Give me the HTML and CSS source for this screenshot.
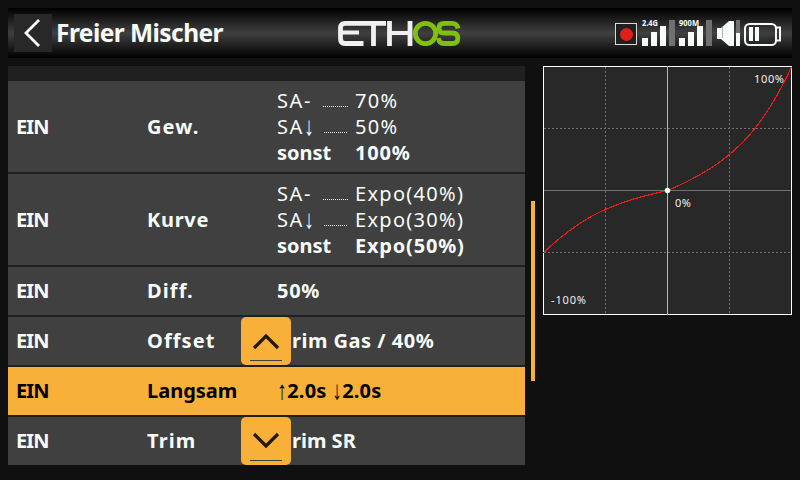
FILE: index.html
```html
<!DOCTYPE html>
<html lang="de">
<head>
<meta charset="utf-8">
<title>Freier Mischer</title>
<link rel="stylesheet" href="styles.css">
</head>
<body>
<header class="topbar">
  <div class="back"><svg width="38" height="38" fill="none" stroke="#fff" stroke-width="2.8"><path d="M25 6 12 19 25 32"/></svg></div>
  <h1 class="title">Freier Mischer</h1>
  <svg class="logo" width="124" height="26" fill="none" stroke-width="4.800">
    <g stroke="#f0f0f0">
      <path d="M48 3.400H7Q2.500 3.400 2.500 7.500V18.500Q2.500 23.500 7 23.500H25.500M35.500 3V26M51.500 1V26M72 1V26"/>
      <path d="M3 12.500H21M52 13H72" stroke-width="4"/>
    </g>
    <g stroke="#80c010">
      <circle cx="87.500" cy="13.500" r="10.200"/>
      <path d="M120 8.500Q119 3.400 114 3.400H106Q101 3.400 101 8Q101 13 106 13H114Q119.800 13 119.800 18.200Q119.800 23.500 114 23.500H106Q101 23.500 100.500 18"/>
    </g>
  </svg>
  <svg class="status" width="170" height="36">
    <rect x="5.500" y="8.500" width="21" height="21" fill="#202020" stroke="#d8dcd8"/>
    <circle cx="16.500" cy="19.500" r="6.500" fill="#e02018"/>
    <g fill="#f8fcf8">
      <path d="M32 23h6v8h-6zM41 17h6v14h-6zM50 11h6v20h-6zM69 23h6v8h-6zM78 17h6v14h-6zM87 11h6v20h-6zM126 18h4v13h-4z"/>
      <path d="M107 13h4l8-7h5v25h-5l-8-7h-4z"/>
      <path d="M139 12h4v14h-4zM145 12h4v14h-4z"/>
    </g>
    <path d="M59 5h6v26h-6zM96 5h6v26h-6zM126 5h4v13h-4z" fill="#707070"/>
    <path d="M112.500 12v11" stroke="#b0b0b0"/>
    <rect x="135" y="9" width="31" height="21" rx="4.500" fill="none" stroke="#f8fcf8" stroke-width="2"/>
    <path d="M166 12.500h4v13h-4" fill="none" stroke="#f8fcf8" stroke-width="2"/>
    <text x="32" y="11" class="band" textLength="16" lengthAdjust="spacingAndGlyphs">2.4G</text>
    <text x="69" y="11" class="band" textLength="20" lengthAdjust="spacingAndGlyphs">900M</text>
  </svg>
</header>
<main class="content">
  <section class="list">
    <div class="row tall">
      <span class="in">EIN</span><span class="wide">Gew.</span>
      <div class="cond">
        <span class="sa">SA-</span><i></i><span class="val">70%</span>
        <span class="sa">SA<span class="arrow">↓</span></span><i class="short"></i><span class="val">50%</span>
        <b>sonst</b><i class="none"></i><b class="val">100%</b>
      </div>
    </div>
    <div class="row tall">
      <span class="in">EIN</span><span class="medium">Kurve</span>
      <div class="cond">
        <span class="sa">SA-</span><i></i><span class="val">Expo(40%)</span>
        <span class="sa">SA<span class="arrow">↓</span></span><i class="short"></i><span class="val">Expo(30%)</span>
        <b>sonst</b><i class="none"></i><b class="val">Expo(50%)</b>
      </div>
    </div>
    <div class="row"><span class="in">EIN</span><span class="wide">Diff.</span><span class="medium">50%</span></div>
    <div class="row"><span class="in">EIN</span><span class="wide">Offset</span><span class="after-button gas">rim Gas / 40%</span>
      <div class="step"><svg width="50" height="48" fill="none"><path d="M13 31 25 19 37 31" stroke="#201808" stroke-width="3.200"/><path d="M9 43.500H41" stroke="#404040"/></svg></div>
    </div>
    <div class="row selected"><span class="in">EIN</span><span>Langsam</span><span class="speed"><span class="arrow">↑</span>2.0s <span class="arrow">↓</span>2.0s</span></div>
    <div class="row"><span class="in">EIN</span><span class="wide">Trim</span><span class="after-button">rim SR</span>
      <div class="step"><svg width="50" height="48" fill="none"><path d="M13 17 25 29 37 17" stroke="#201808" stroke-width="3.200"/><path d="M9 43.500H41" stroke="#404040"/></svg></div>
    </div>
  </section>
  <div class="scroll"></div>
  <svg class="chart" width="249" height="249">
    <rect x=".5" y=".5" width="248" height="248" fill="#282828" stroke="#fff"/>
    <path d="M62.500 1V248M186.500 1V248M1 62.500H248M1 186.500H248" stroke="#707070" stroke-dasharray="2 2" fill="none"/>
    <path d="M1 124.500H248" stroke="#707070"/>
    <path d="M124.500 0V249" stroke="#f8b038"/>
    <path d="M.5 186.500C31 158 59 138 124.500 124.500C186 99 218 67 248.500 1" fill="none" stroke="#e81c18" stroke-width="1.200" shape-rendering="crispEdges"/>
    <circle cx="124.500" cy="124.500" r="2.700" fill="#fff"/>
    <text x="211" y="17" class="axis" textLength="30">100%</text>
    <text x="132" y="141" class="axis" textLength="16">0%</text>
    <text x="8" y="238" class="axis" textLength="35">-100%</text>
  </svg>
</main>
</body>
</html>
```
FILE: styles.css
```css
* { box-sizing: border-box; }
body {
  margin: 0;
  width: 800px;
  height: 480px;
  padding: 8px;
  overflow: hidden;
  background: #101010;
  color: #f8fcf8;
  font-family: "Noto Sans", sans-serif;
}
svg { display: block; }
.topbar {
  display: flex;
  height: 50px;
  background: linear-gradient(#000, #404040 50%, #000);
}
.back { width: 38px; height: 38px; margin: 6px 4px 0 6px; background: #282828; }
.title {
  width: 274px;
  margin: 0 8px 0 0;
  font-size: 24.5px;
  letter-spacing: -0.55px;
  line-height: 50px;
  font-weight: 700;
  white-space: nowrap;
}
.logo { margin-top: 12px; }
.status { margin: 7px 0 0 148px; overflow: visible; }
.band { font: 700 8px "Noto Sans", sans-serif; fill: #f8fcf8; }
.content { display: flex; margin-top: 8px; align-items: flex-start; }
.list {
  display: flex;
  flex-direction: column;
  gap: 2px;
  width: 517px;
  padding-top: 15px;
  background: #202020;
}
.row {
  position: relative;
  display: grid;
  grid-template-columns: 130px 130px 1fr;
  align-items: center;
  height: 48px;
  padding-left: 9px;
  background: #404040;
  font-size: 20px;
  line-height: 26px;
  font-weight: 700;
  white-space: pre;
}
.tall { height: 91px; }
.selected { background: #f8b038; color: #000; }
.in { margin-left: -1px; letter-spacing: -0.9px; }
.wide { letter-spacing: 1.1px; }
.medium { letter-spacing: 0.7px; }
.gas { letter-spacing: 0.5px; }
.cond {
  display: grid;
  grid-template-columns: 46px 32px auto;
  font-weight: 400;
}
.cond i { width: 25px; height: 1px; margin-top: 18px; background: repeating-linear-gradient(90deg, #f8fcf8 0 1px, transparent 1px 2px); }
.cond i.short { width: 23px; margin-left: 1px; }
.cond i.none { background: none; }
.sa { letter-spacing: 1.6px; }
.val { letter-spacing: 1.3px; }
b.val { letter-spacing: 0.8px; }
.arrow { display: inline-block; line-height: 20px; transform: translateY(-1px) scaleY(1.3); }
.speed { letter-spacing: 0.2px; }
.after-button { padding-left: 15px; }
.step {
  position: absolute;
  left: 233px;
  top: 0;
  width: 50px;
  height: 48px;
  border-radius: 5px;
  background: #f8b038;
}
.scroll { width: 4px; height: 180px; margin: 135px 8px 0 6px; background: #f8b038; }
.axis { font: 11px "Noto Sans", sans-serif; fill: #f0f0f0; }
```
